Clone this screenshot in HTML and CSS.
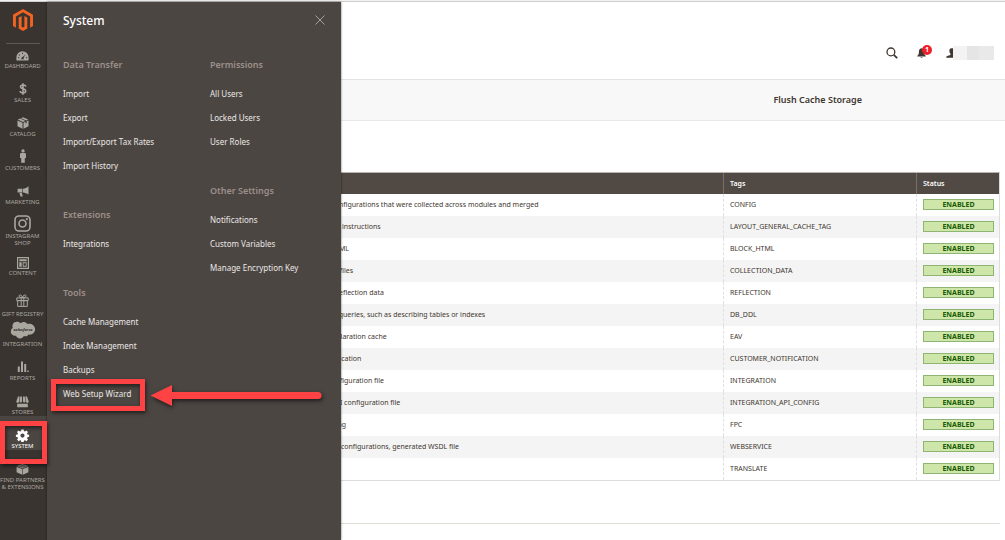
FILE: index.html
```html
<!DOCTYPE html>
<html lang="en">
<head>
<meta charset="utf-8">
<meta name="viewport" content="width=device-width, initial-scale=1">
<title>Cache Management</title>
<link rel="stylesheet" href="styles.css">
</head>
<body>
<div class="shell">
  <nav class="sidebar" aria-label="Main menu">
    <a class="logo" href="#" aria-label="Magento">
      <svg width="20" height="22" viewBox="0 0 20 22"><path d="M10 0 20 5.700v11.400l-2.900 1.600V7.400L10 3.300 2.900 7.400v11.300L0 17.100V5.700z"/><path d="M5.700 8.600 8.600 7v10.800l1.400.8 1.400-.8V7l2.900 1.600v10.900L10 22l-4.300-2.500z"/></svg>
    </a>
    <ul class="menu">
      <li><a class="menu-item" href="#"><span class="menu-icon"><svg width="13" height="10" viewBox="0 0 13 10"><path fill-rule="evenodd" d="M.6 9.500A6 6 0 0 1 .4 6.400a6.100 6.100 0 0 1 12.200 0 6 6 0 0 1-.2 3.100zM5.200 8.200h2.600l-.2-1.400 2-3.600-3 2.900c-.9.300-1.300 1.100-1.400 2.100zM2 6.200v1h1.300v-1zM3.200 3.200l-.7.700.9.9.7-.7zM6 1.700V3h1V1.700zM9.900 6.200v1h1.300v-1z"/></svg></span><span>Dashboard</span></a></li>
      <li><a class="menu-item" href="#"><span class="menu-icon"><svg width="8" height="12" viewBox="0 0 8 12"><path d="M6.800 3.700C6.600 2.500 5.600 2 4.100 2 2.600 2 1.500 2.600 1.500 3.700c0 2.700 5.200 1.300 5.200 4.300 0 1.300-1.100 2-2.700 2S1.300 9.300 1.100 8M4 .2v11.600" fill="none" stroke="currentColor" stroke-width="1.600"/></svg></span><span>Sales</span></a></li>
      <li><a class="menu-item" href="#"><span class="menu-icon"><svg width="12" height="12" viewBox="0 0 12 12"><path d="M6 .3 11.200 2.600 9.300 3.500 4 1.200zM3.200 1.600 8.400 3.900 6 5 .8 2.600zM.5 3.400l5 2.300v6L.5 9.300zM6.500 5.700l2-.9v1.800l1.200-.6V4.300l1.800-.9v5.900l-5 2.400z"/></svg></span><span>Catalog</span></a></li>
      <li><a class="menu-item" href="#"><span class="menu-icon"><svg width="8" height="14" viewBox="0 0 8 14"><circle cx="4" cy="1.900" r="1.700"/><path d="M2.300 4h3.400c.9 0 1.300.6 1.300 1.400V9H5.800v4.800H2.200V9H1V5.400C1 4.600 1.400 4 2.300 4z"/></svg></span><span>Customers</span></a></li>
      <li><a class="menu-item" href="#"><span class="menu-icon"><svg width="12" height="11" viewBox="0 0 12 11"><path d="M11.500.2v8.400C9.800 7.300 8 6.700 6 6.500V2.700c2-.2 3.800-1 5.500-2.500zM.6 3.200Q.6 2.800 1 2.800h4.400v3.600H1q-.4 0-.4-.4zM2.500 7h2.400l.9 3.400H3.500z"/></svg></span><span>Marketing</span></a></li>
      <li><a class="menu-item instagram" href="#"><span class="menu-icon"><svg width="17" height="17" viewBox="0 0 17 17"><g fill="none" stroke="currentColor" stroke-width="1.600"><rect x="1" y="1" width="15" height="15" rx="4"/><circle cx="8.500" cy="8.500" r="3.500"/></g><circle cx="12.900" cy="4.100" r="1.100"/></svg></span><span>Instagram<br>Shop</span></a></li>
      <li><a class="menu-item content" href="#"><span class="menu-icon"><svg width="12" height="12" viewBox="0 0 12 12"><path fill-rule="evenodd" d="M0 0h12v12H0zM1.200 1.200v9.600h9.600V1.200z"/><path d="M2.300 2.300h7.400v2H2.300zM2.300 5.300h2.400v4.400H2.300z"/><path fill-rule="evenodd" d="M5.700 5.300h4v4.400h-4zM6.600 6.200v2.600h2.200V6.200z"/></svg></span><span>Content</span></a></li>
      <li><a class="menu-item gift" href="#"><span class="menu-icon"><svg width="13" height="13" viewBox="0 0 13 13"><path d="M.8 3.900h11.400v2.700H.8zM1.700 6.600h9.600v5.800H1.700zM5.200 3.900v8.500M7.800 3.900v8.500M6.500 3.600C4.500 3.700 2.800 3.100 3 1.800S5.900.5 6.500 3.600C7.100.5 9.800.5 10 1.800s-1.500 1.900-3.500 1.800z" fill="none" stroke="currentColor" stroke-width="1"/></svg></span><span>Gift Registry</span></a></li>
      <li><a class="menu-item integration" href="#"><span class="menu-icon"><svg width="26" height="18" viewBox="0 0 26 18"><path d="M10.800 2.200a4.400 4.400 0 0 1 6.700.9 5 5 0 0 1 2-.4c3 0 5.600 2.500 5.600 5.600s-3 6-6.500 5.300c-1 1.700-3 2.200-4.700 1.400-1.700 3.400-6.500 3.100-7.900-.2C3.300 15.200.7 13.200.8 10.500c0-1.600.8-2.800 2-3.500C1.600 3.600 3.700.7 6.800.7c1.700 0 3.100.6 4 1.500z"/><text class="cloud-text" x="13" y="10" text-anchor="middle">salesforce</text></svg></span><span>Integration</span></a></li>
      <li><a class="menu-item" href="#"><span class="menu-icon"><svg width="12" height="12" viewBox="0 0 12 12"><path d="M.8 5.500h2V11h-2zM4 .5h2V11H4zM7.200 3h2v8h-2zM10.200 9.500h1.500V11h-1.500z"/></svg></span><span>Reports</span></a></li>
      <li><a class="menu-item stores" href="#"><span class="menu-icon"><svg width="13" height="12" viewBox="0 0 13 12"><path d="M2 .5h1.700L3 5.600a1.300 1.300 0 0 1-2.700 0zM4.300.5H6v5.100a1.300 1.300 0 0 1-2.500 0zM7 .5h1.700l.8 5.100a1.300 1.300 0 0 1-2.500 0zM9.300.5H11l1.700 5.100a1.300 1.300 0 0 1-2.700 0zM1.200 7.700h10.600v3.500H1.200z"/></svg></span><span>Stores</span></a></li>
      <li><a class="menu-item system" href="#" aria-current="page"><span class="menu-icon"><svg width="13" height="13" viewBox="0 0 13 13"><path fill-rule="evenodd" d="M5.300.4h2.400l.3 1.700 1 .4 1.400-1 1.600 1.600-1 1.400.4 1 1.700.3v2l-1.700.4-.4 1 1 1.400-1.600 1.600-1.400-1-1 .4-.3 1.500H5.300L5 11.600l-1-.4-1.400 1L1 10.600l1-1.400-.4-1L-.1 7.800v-2l1.700-.3.4-1-1-1.400 1.600-1.600 1.400 1 1-.4zM6.500 4.500a2.100 2.100 0 1 0 0 4.200 2.100 2.100 0 0 0 0-4.200z"/></svg></span><span>System</span></a></li>
      <li><a class="menu-item" href="#"><span class="menu-icon"><svg width="13" height="12" viewBox="0 0 13 12"><path d="M.6 3.700l5.600 2.400v5.700L.6 9.200zM6.800 6.100l5.600-2.400v5.500l-5.600 2.600zM.9 3.100 6.500.8l5.600 2.300-5.600 2.400z"/><g fill="currentColor" stroke="#373330" stroke-width=".5"><ellipse cx="6.500" cy="1.500" rx="1.600" ry=".9"/><ellipse cx="3.800" cy="2.700" rx="1.600" ry=".9"/><ellipse cx="9.200" cy="2.700" rx="1.600" ry=".9"/><ellipse cx="6.500" cy="4" rx="1.600" ry=".9"/></g></svg></span><span>Find Partners<br>&amp; Extensions</span></a></li>
    </ul>
  </nav>

  <section class="submenu" aria-label="System menu">
    <header class="submenu-head">
      <h2>System</h2>
      <button class="close" type="button" aria-label="Close"><svg width="10" height="10" viewBox="0 0 10 10"><path d="M.5.500l9 9M9.500.500l-9 9"/></svg></button>
    </header>
    <div class="submenu-columns">
      <div class="column">
        <div class="group"><h3>Data Transfer</h3>
          <a href="#">Import</a><a href="#">Export</a><a href="#">Import/Export Tax Rates</a><a href="#">Import History</a></div>
        <div class="group"><h3>Extensions</h3>
          <a href="#">Integrations</a></div>
        <div class="group"><h3>Tools</h3>
          <a href="#">Cache Management</a><a href="#">Index Management</a><a href="#">Backups</a>
          <a class="marked" href="#">Web Setup Wizard
            <svg class="arrow" width="180" height="30" viewBox="0 0 180 30" aria-hidden="true"><path d="M4.500 12.500 26 2v7h146a3.500 3.500 0 0 1 0 7H26v7z"/></svg></a></div>
      </div>
      <div class="column">
        <div class="group"><h3>Permissions</h3>
          <a href="#">All Users</a><a href="#">Locked Users</a><a href="#">User Roles</a></div>
        <div class="group"><h3>Other Settings</h3>
          <a href="#">Notifications</a><a href="#">Custom Variables</a><a href="#">Manage Encryption Key</a></div>
      </div>
    </div>
  </section>

  <main class="page">
    <header class="page-head">
      <button class="icon-button" type="button" aria-label="Search"><svg width="12" height="12" viewBox="0 0 12 12"><circle cx="4.900" cy="4.900" r="3.900" fill="none" stroke="currentColor" stroke-width="1.300"/><path d="M7.800 7.800l3.400 3.400" stroke="currentColor" stroke-width="1.800"/></svg></button>
      <button class="icon-button bell" type="button" aria-label="Notifications"><svg width="9" height="10" viewBox="0 0 9 10"><path d="M4.500.3c2.300.6 2.600 2.200 2.600 3.900C7.100 6 7.700 7 8.700 7.800v.7H.3v-.7c1-.8 1.600-1.800 1.600-3.600 0-1.700.3-3.300 2.600-3.900zM3.400 9h2.200c-.3 1-1.900 1-2.200 0z"/></svg><span class="badge">1</span></button>
      <button class="account" type="button" aria-label="Account"><svg width="7" height="10" viewBox="0 0 7 10"><path d="M7 .2H5.500C3.800.4 3.200 1.500 3.400 3c0 1.300.4 2 1 2.600v1.300L1.200 8C.4 8.300.2 9 .2 9.800H7z"/></svg><span class="mask"><i></i><i></i><i></i></span></button>
    </header>
    <div class="toolbar"><button type="button">Flush Cache Storage</button></div>
    <div class="grid-area">
      <table class="cache">
        <colgroup><col class="col-type"><col><col class="col-tags"><col class="col-status"></colgroup>
        <thead><tr><th></th><th></th><th>Tags</th><th>Status</th></tr></thead>
        <tbody>
          <tr><td></td><td>Various XML configurations that were collected across modules and merged</td><td>CONFIG</td><td><span class="status">ENABLED</span></td></tr>
          <tr><td></td><td>Layout building instructions</td><td>LAYOUT_GENERAL_CACHE_TAG</td><td><span class="status">ENABLED</span></td></tr>
          <tr><td></td><td>Page blocks HTML</td><td>BLOCK_HTML</td><td><span class="status">ENABLED</span></td></tr>
          <tr><td></td><td>Collection data files</td><td>COLLECTION_DATA</td><td><span class="status">ENABLED</span></td></tr>
          <tr><td></td><td>API interfaces reflection data</td><td>REFLECTION</td><td><span class="status">ENABLED</span></td></tr>
          <tr><td></td><td>Results of DDL queries, such as describing tables or indexes</td><td>DB_DDL</td><td><span class="status">ENABLED</span></td></tr>
          <tr><td></td><td>Entity types declaration cache</td><td>EAV</td><td><span class="status">ENABLED</span></td></tr>
          <tr><td></td><td>Customer Notification</td><td>CUSTOMER_NOTIFICATION</td><td><span class="status">ENABLED</span></td></tr>
          <tr><td></td><td>Integration configuration file</td><td>INTEGRATION</td><td><span class="status">ENABLED</span></td></tr>
          <tr><td></td><td>Integrations API configuration file</td><td>INTEGRATION_API_CONFIG</td><td><span class="status">ENABLED</span></td></tr>
          <tr><td></td><td>Full page caching</td><td>FPC</td><td><span class="status">ENABLED</span></td></tr>
          <tr><td></td><td>REST and SOAP configurations, generated WSDL file</td><td>WEBSERVICE</td><td><span class="status">ENABLED</span></td></tr>
          <tr><td></td><td>Translation files</td><td>TRANSLATE</td><td><span class="status">ENABLED</span></td></tr>
        </tbody>
      </table>
      <hr class="rule">
    </div>
  </main>
</div>
</body>
</html>
```
FILE: styles.css
```css
*, *::before, *::after { box-sizing: border-box; }

body {
  margin: 0;
  padding-top: 1px;
  background: #f2f2f2;
  color: #41362f;
  font-family: "Noto Sans", "Open Sans", sans-serif;
  font-size: 7px;
}

a { color: inherit; text-decoration: none; }
button { padding: 0; border: 0; background: none; color: inherit; font: inherit; }
svg { display: block; fill: currentColor; overflow: visible; }
h2, h3 { margin: 0; }

.shell {
  position: relative;
  display: grid;
  grid-template-columns: 47px 1fr;
  min-height: calc(100vh - 1px);
  border-top: 1px solid #cfcfcf;
  background: #fff;
}

/* Sidebar */
.sidebar { background: #393430; color: #aaa6a0; }
.logo {
  display: flex;
  justify-content: center;
  height: 42px;
  margin: 0 7px 0 6px;
  padding-top: 7px;
  border-bottom: 1px solid #5f5853;
  color: #f26322;
}
.menu { margin: 0; padding: 0; list-style: none; }
.menu-item {
  display: flex;
  flex-direction: column;
  align-items: center;
  padding-right: 2px;
  font-size: 6px;
  line-height: 7px;
  text-align: center;
  text-transform: uppercase;
  white-space: nowrap;
}
.menu-icon {
  display: flex;
  align-items: flex-end;
  height: 27px;
  padding-bottom: 2px;
}
.menu li:first-child .menu-icon { height: 19px; }
.instagram .menu-icon, .stores .menu-icon { padding-bottom: 1px; }
.content .menu-icon { height: 23px; padding-bottom: 1px; }
.gift .menu-icon { height: 34px; padding-bottom: 4px; }
.integration .menu-icon { height: 23px; }
.cloud-text {
  fill: #373330;
  font-size: 4px;
  font-style: italic;
  font-weight: 700;
  text-transform: none;
}

.system { position: relative; background: #4c4643; color: #fff; }
.system .menu-icon { padding-bottom: 1px; }
.system::after,
.marked::after {
  content: "";
  position: absolute;
  z-index: 5;
  border: 5px solid #ff4244;
  box-shadow: 1px 2px 4px rgba(0, 0, 0, .6), inset 1px 2px 4px rgba(0, 0, 0, .6);
}
.system::after {
  top: 5px;
  left: 0;
  width: 47px;
  height: 43px;
}

/* Flyout */
.submenu {
  position: absolute;
  z-index: 3;
  top: 0;
  bottom: 0;
  left: 47px;
  width: 294px;
  padding: 0 16px;
  background: #4c4643;
  color: #eae7e5;
  box-shadow: 0 0 2px rgba(0, 0, 0, .6);
}
.submenu-head {
  display: flex;
  align-items: center;
  justify-content: space-between;
  height: 36px;
}
.submenu-head h2 { color: #fff; font-size: 12px; font-weight: 500; }
.close { color: #a79d95; }
.close path { fill: none; stroke: currentColor; }
.submenu-columns {
  display: grid;
  grid-template-columns: 147px 1fr;
  padding-top: 15px;
}
.group { display: flex; flex-direction: column; align-items: flex-start; margin-bottom: 25px; }
.group h3 {
  margin-bottom: 5px;
  color: #9c908a;
  font-size: 9px;
  font-weight: 600;
  line-height: 24px;
}
.group a { font-size: 8px; line-height: 24px; white-space: nowrap; }

.marked { position: relative; }
.marked::after {
  top: -3px;
  left: -12px;
  width: 94px;
  height: 32px;
}
.arrow {
  position: absolute;
  top: 1px;
  left: 83px;
  fill: #ff4244;
  filter: drop-shadow(1px 2px 2px rgba(0, 0, 0, .6));
}

/* Page */
.page { min-width: 0; }
.page-head {
  display: flex;
  align-items: center;
  justify-content: flex-end;
  gap: 19px;
  height: 77px;
  padding: 25px 11px 0 0;
}
.bell { position: relative; margin-right: 1px; }
.badge {
  position: absolute;
  top: -3px;
  left: 5px;
  width: 10px;
  height: 10px;
  border-radius: 50%;
  background: #eb202b;
  color: #fff;
  font-size: 7px;
  font-weight: 700;
  line-height: 10px;
}
.account { display: flex; align-items: center; }
.mask { display: flex; height: 14px; }
.mask i { width: 14px; background: #f3f3f3; }
.mask i:nth-child(2) { width: 12px; background: #e5e5e5; }
.mask i:nth-child(3) { width: 15px; background: #e9e9e9; }

.toolbar {
  display: flex;
  justify-content: flex-end;
  height: 42px;
  padding: 0 143px 1px 0;
  border-top: 1px solid #e3e3e3;
  border-bottom: 1px solid #e9e9e9;
  background: #f8f8f8;
}
.toolbar button { font-size: 9px; font-weight: 600; }

.grid-area { padding: 51px 5px 0 15px; }
.cache {
  width: 100%;
  table-layout: fixed;
  border-collapse: separate;
  border-spacing: 0;
  border: 1px solid #dcdcdc;
  border-top-color: #b9b4b0;
}
.col-type { width: 220px; }
.col-tags { width: 193px; }
.col-status { width: 83px; }
.cache th, .cache td {
  padding: 0 6px;
  border-left: 1px dashed #e0e0e0;
  text-align: left;
  white-space: nowrap;
}
.cache th {
  height: 21px;
  border-left: 1px solid #79706a;
  background: #514943;
  color: #fff;
  font-weight: 600;
}
.cache th:nth-child(-n+2), .cache td:nth-child(-n+2) { border-left: 0; }
.cache td { height: 22px; padding-bottom: 2px; }
.cache th:last-child, .cache td:last-child { padding-right: 5px; }
.cache tbody tr:nth-child(even) { background: #f4f4f4; }
.status {
  display: block;
  height: 11px;
  border: 1px solid #8fb573;
  background: #cfe6ab;
  color: #185b00;
  font-weight: 700;
  line-height: 9px;
  text-align: center;
}
.rule { margin: 42px 0 0; border: 0; border-top: 1px solid #e0ddd7; }
```
